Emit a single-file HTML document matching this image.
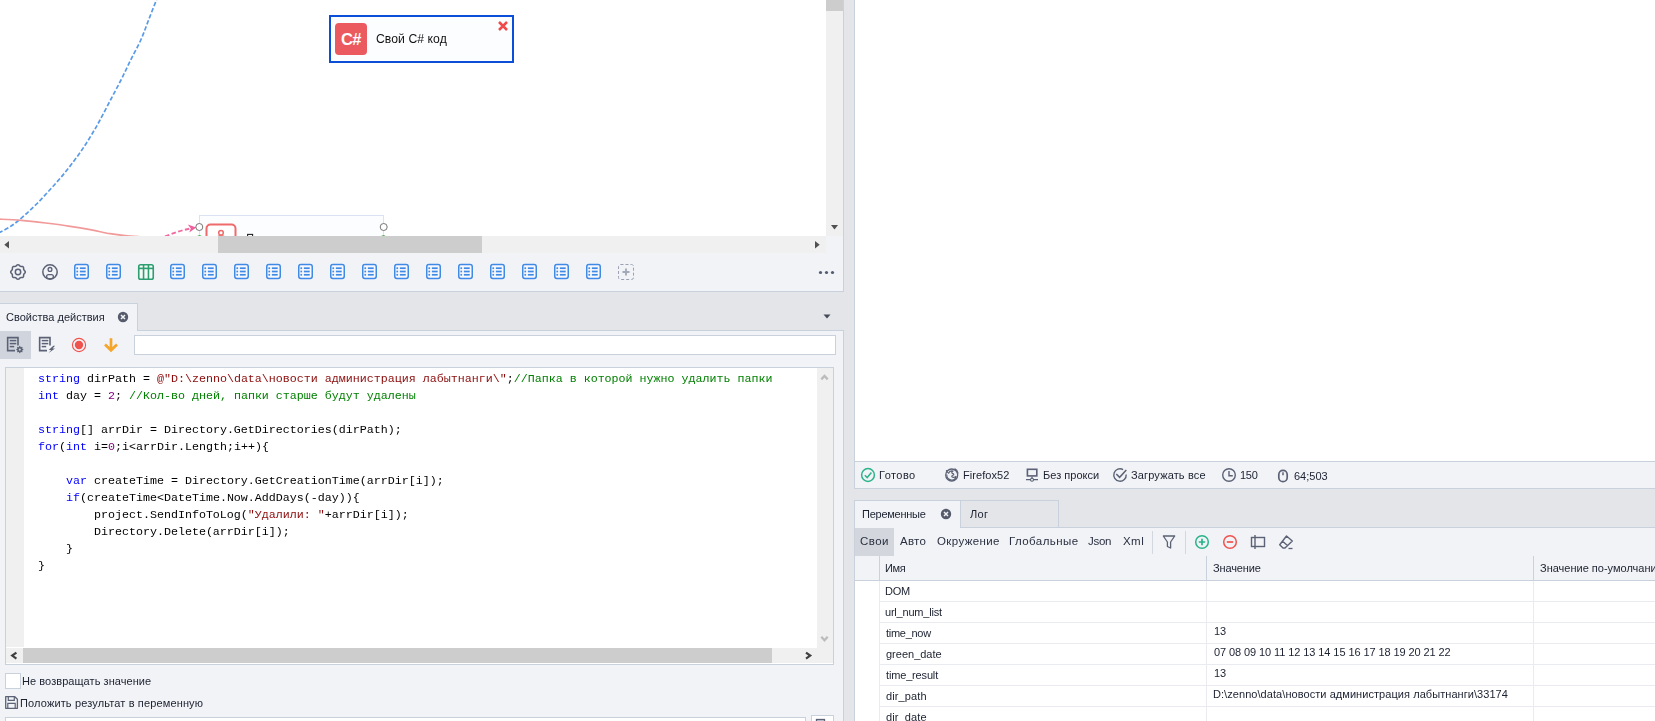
<!DOCTYPE html>
<html lang="ru">
<head>
<meta charset="utf-8">
<title>ProjectMaker</title>
<style>
*{box-sizing:border-box;margin:0;padding:0}
html,body{width:1655px;height:721px;overflow:hidden;background:#fff}
body{position:relative;font-family:"Liberation Sans","DejaVu Sans",sans-serif;font-size:11px;color:#1c2130}
.abs{position:absolute}
.t{position:absolute;white-space:nowrap;line-height:14px;will-change:transform}
/* ---------- left: canvas ---------- */
#canvas{left:0;top:0;width:826px;height:236px;background:#fff;overflow:hidden}
#vsb{left:826px;top:0;width:17px;height:236px;background:#f0f0f0}
#vsb .thumb{left:0;top:0;width:17px;height:11px;background:#cdcdcd}
#hsb{left:0;top:236px;width:826px;height:17px;background:#f0f0f0}
#hsb .thumb{left:218px;top:0;width:264px;height:17px;background:#cdcdcd}
#corner{left:826px;top:236px;width:17px;height:17px;background:#f2f3f7}
#lborder{left:843px;top:0;width:1px;height:292px;background:#c9d1dd}
#split{left:844px;top:0;width:10px;height:721px;background:#e4e5e9}
#rborder{left:854px;top:0;width:1px;height:721px;background:#c9d1dd}
#tools{left:0;top:253px;width:843px;height:38px;background:#f2f3f7}
#toolsb{left:0;top:291px;width:844px;height:1px;background:#c9d1dd}
#gap1{left:0;top:292px;width:844px;height:39px;background:#e4e5e9}
/* ---------- left: properties ---------- */
#ptab{left:0;top:303px;width:138px;height:28px;background:#f2f3f7;border-top:1px solid #c9d1dd;border-right:1px solid #c9d1dd}
#ptabline{left:138px;top:330px;width:706px;height:1px;background:#c9d1dd}
#props{left:0;top:331px;width:844px;height:390px;background:#f2f3f7}
#propsr{left:843px;top:331px;width:1px;height:390px;background:#c9d1dd}
#btn1{left:0;top:331px;width:31px;height:28px;background:#d3d6dc}
#inp{left:134px;top:335px;width:702px;height:20px;background:#fff;border:1px solid #c9d1dd}
#editor{left:5px;top:367px;width:829px;height:298px;background:#fff;border:1px solid #c9d1dd}
#gutter{left:6px;top:368px;width:18px;height:279px;background:#f0f0f0}
#evsb{left:817px;top:368px;width:16px;height:280px;background:#f0f0f0}
#ehsb{left:6px;top:648px;width:827px;height:15px;background:#f0f0f0}
#ehsb .thumb{left:17px;top:0;width:749px;height:15px;background:#cdcdcd}
#code{left:38px;top:371px;font-family:"Liberation Mono","DejaVu Sans Mono",monospace;font-size:11.67px;line-height:17px;color:#000;white-space:pre;position:absolute;will-change:transform}
.k{color:#0000ff}.s{color:#8b0a0a}.c{color:#008000}.n{color:#800080}
#chk{left:5px;top:673px;width:16px;height:16px;background:#fff;border:1px solid #c9d1dd}
#field{left:5px;top:717px;width:801px;height:10px;background:#fff;border:1px solid #c9d1dd}
#fbtn{left:811px;top:715px;width:23px;height:10px;background:#fff;border:1px solid #c9d1dd}
/* ---------- right ---------- */
#browser{left:855px;top:0;width:800px;height:461px;background:#fff}
#status{left:855px;top:461px;width:800px;height:28px;background:#f2f3f7;border-top:1px solid #c9d1dd;border-bottom:1px solid #c9d1dd}
#gap2{left:855px;top:489px;width:800px;height:39px;background:#e4e5e9}
#vtab{left:855px;top:500px;width:106px;height:28px;background:#f2f3f7;border-top:1px solid #c9d1dd;border-right:1px solid #c9d1dd}
#ltab{left:961px;top:500px;width:98px;height:28px;background:#e4e5e9;border-top:1px solid #c9d1dd;border-right:1px solid #c9d1dd;border-bottom:1px solid #c9d1dd}
#vtabline{left:1059px;top:527px;width:596px;height:1px;background:#c9d1dd}
#vars{left:855px;top:528px;width:800px;height:193px;background:#f2f3f7}
#svoi{left:855px;top:528px;width:39px;height:28px;background:#d3d6dc}
.vsep{width:1px;top:531px;height:23px;background:#d3d8e0}
#grid{left:855px;top:581px;width:800px;height:140px;background:#fff}
#hdrline{left:855px;top:580px;width:800px;height:1px;background:#c9d1dd}
.hl{left:879px;width:776px;height:1px;background:#e9ebf0}
.vl{top:581px;width:1px;height:140px;background:#e9ebf0}
.hvl{top:556px;width:1px;height:25px;background:#c9d1dd}
.seg{font-size:11.5px;letter-spacing:.2px;color:#2a3040}
</style>
</head>
<body>
<!-- LEFT: canvas -->
<div id="canvas" class="abs">
<svg class="abs" style="left:0;top:0" width="826" height="236" viewBox="0 0 826 236">
  <path d="M160.3 -10.0 C159.7 -8.3 158.4 -5.0 156.4 0.0 C154.4 5.0 151.2 13.3 148.6 20.0 C146.0 26.7 143.8 33.3 140.8 40.0 C137.8 46.7 134.0 53.3 130.7 60.0 C127.4 66.7 124.4 73.3 121.0 80.0 C117.6 86.7 114.0 93.3 110.5 100.0 C107.0 106.7 102.7 115.0 100.0 120.0 C97.3 125.0 96.9 125.8 94.4 130.0 C91.9 134.2 88.5 140.0 85.0 145.3 C81.5 150.6 77.2 156.7 73.2 162.0 C69.2 167.3 65.1 172.5 61.0 177.3 C56.9 182.1 52.9 186.6 48.8 191.0 C44.7 195.4 40.7 199.9 36.6 204.0 C32.5 208.1 28.5 211.8 24.4 215.4 C20.3 219.0 16.3 222.5 12.2 225.3 C8.1 228.1 3.4 230.4 0.0 232.2 C-3.4 234.0 -6.7 235.4 -8.0 236.0" fill="none" stroke="#5a9be8" stroke-width="1.700" stroke-dasharray="4.400 2.100"/>
  <path d="M-10.0 219.0 C-8.3 219.0 -5.2 219.0 0.0 219.2 C5.2 219.4 13.8 219.7 21.4 220.3 C29.0 220.9 37.9 222.0 45.8 223.0 C53.7 224.0 61.0 224.9 68.6 226.1 C76.2 227.2 84.6 228.6 91.5 229.9 C98.4 231.2 104.4 232.8 110.0 233.7 C115.6 234.6 119.8 235.1 125.0 235.6 C130.2 236.1 138.3 236.6 141.0 236.8" fill="none" stroke="#f29a9a" stroke-width="1.700"/>
  <path d="M165 236.500 C175 232.500 182 230.200 190 228.600" fill="none" stroke="#f26aa0" stroke-width="1.900" stroke-dasharray="4.500 2.500"/>
  <path d="M187.800 224.600 L196.400 227.600 L189.200 232.400 L190.800 228.400 Z" fill="#f0609a"/>
  <rect x="199.5" y="215.5" width="184" height="40" fill="#fcfdff" stroke="#dbe3f2" stroke-width="1"/>
  <rect x="206.5" y="224.5" width="29" height="29" rx="4" fill="#fff" stroke="#ef6b6b" stroke-width="2"/>
  <circle cx="221" cy="232.800" r="2.300" fill="none" stroke="#ef6b6b" stroke-width="1.500"/><path d="M216.500 240 C216.500 237 218.500 235.800 221 235.800 C223.500 235.800 225.500 237 225.500 240" fill="none" stroke="#ef6b6b" stroke-width="1.500"/>
  <rect x="247.600" y="234.400" width="5" height="4" fill="#fff" stroke="#222" stroke-width="1.100"/>
  <circle cx="199.500" cy="237.700" r="2.500" fill="#2ca02c"/>
  <circle cx="383.500" cy="237.700" r="2.500" fill="#2ca02c"/>
  <circle cx="199.300" cy="227" r="3.500" fill="#fff" stroke="#666" stroke-width="0.900"/>
  <circle cx="383.700" cy="227" r="3.500" fill="#fff" stroke="#666" stroke-width="0.900"/>
</svg>
<div class="abs" style="left:329px;top:15px;width:185px;height:48px;border:2px solid #0b4fd8;background:#fcfdff"></div>
<div class="abs" style="left:335px;top:23px;width:32px;height:32px;border-radius:4px;background:#eb5a5e;color:#fff;font-weight:bold;font-size:16.5px;line-height:32px;text-align:center;letter-spacing:-.5px">C#</div>
<div class="t" style="left:376.0px;top:32px;font-size:12.2px;color:#111;letter-spacing:0.06px">Свой C# код</div>
<svg class="abs" style="left:497px;top:20px" width="12" height="12" viewBox="0 0 12 12"><path d="M2 2 L10 10 M10 2 L2 10" stroke="#f04a4a" stroke-width="2.500" fill="none"/></svg>
</div>
<div id="vsb" class="abs"><div class="thumb abs"></div>
<svg class="abs" style="left:5px;top:225px" width="7" height="5" viewBox="0 0 7 5"><path d="M0 0H7L3.500 4.500Z" fill="#505050"/></svg></div>
<div id="hsb" class="abs"><div class="thumb abs"></div>
<svg class="abs" style="left:4px;top:5px" width="5" height="8" viewBox="0 0 5 8"><path d="M5 0V7.500L0.300 3.750Z" fill="#505050"/></svg>
<svg class="abs" style="left:815px;top:5px" width="5" height="8" viewBox="0 0 5 8"><path d="M0 0V7.500L4.700 3.750Z" fill="#505050"/></svg></div>
<div id="corner" class="abs"></div>
<div id="tools" class="abs"></div>
<div id="toolsb" class="abs"></div>
<div id="gap1" class="abs"></div>
<div id="lborder" class="abs"></div>
<div id="split" class="abs"></div>
<div id="rborder" class="abs"></div>
<!--TOOLICONS--><svg class="abs" style="left:0;top:253px" width="843" height="38" viewBox="0 253 843 38"><path d="M18.00 264.70 L18.70 264.90 L19.32 265.38 L19.85 265.91 L20.37 266.27 L21.00 266.39 L21.75 266.39 L22.53 266.48 L23.16 266.84 L23.52 267.47 L23.61 268.25 L23.61 269.00 L23.73 269.63 L24.09 270.15 L24.62 270.68 L25.10 271.30 L25.30 272.00 L25.10 272.70 L24.62 273.32 L24.09 273.85 L23.73 274.37 L23.61 275.00 L23.61 275.75 L23.52 276.53 L23.16 277.16 L22.53 277.52 L21.75 277.61 L21.00 277.61 L20.37 277.73 L19.85 278.09 L19.32 278.62 L18.70 279.10 L18.00 279.30 L17.30 279.10 L16.68 278.62 L16.15 278.09 L15.63 277.73 L15.00 277.61 L14.25 277.61 L13.47 277.52 L12.84 277.16 L12.48 276.53 L12.39 275.75 L12.39 275.00 L12.27 274.37 L11.91 273.85 L11.38 273.32 L10.90 272.70 L10.70 272.00 L10.90 271.30 L11.38 270.68 L11.91 270.15 L12.27 269.63 L12.39 269.00 L12.39 268.25 L12.48 267.47 L12.84 266.84 L13.47 266.48 L14.25 266.39 L15.00 266.39 L15.63 266.27 L16.15 265.91 L16.68 265.38 L17.30 264.90 L18.00 264.70 Z" fill="none" stroke="#5b6275" stroke-width="1.5" stroke-linejoin="round"/><circle cx="18" cy="272" r="2.700" fill="none" stroke="#5b6275" stroke-width="1.5"/><circle cx="50" cy="272" r="7.200" fill="none" stroke="#5b6275" stroke-width="1.5"/><circle cx="50" cy="269.4" r="1.900" fill="none" stroke="#5b6275" stroke-width="1.3"/><rect x="46.6" y="274.6" width="6.800" height="4" rx="2" fill="#f2f3f7" stroke="#5b6275" stroke-width="1.3"/><rect x="74.75" y="264.55" width="13.500" height="14" rx="2.200" fill="#f6f8fc" stroke="#3f8ae6" stroke-width="1.5"/><rect x="76.40" y="267.35" width="1.700" height="1.700" fill="#3f8ae6"/><rect x="79.90" y="267.35" width="5.800" height="1.700" fill="#3f8ae6"/><rect x="76.40" y="270.65" width="1.700" height="1.700" fill="#3f8ae6"/><rect x="79.90" y="270.65" width="5.800" height="1.700" fill="#3f8ae6"/><rect x="76.40" y="273.95" width="1.700" height="1.700" fill="#3f8ae6"/><rect x="79.90" y="273.95" width="5.800" height="1.700" fill="#3f8ae6"/><rect x="106.75" y="264.55" width="13.500" height="14" rx="2.200" fill="#f6f8fc" stroke="#3f8ae6" stroke-width="1.5"/><rect x="108.40" y="267.35" width="1.700" height="1.700" fill="#3f8ae6"/><rect x="111.90" y="267.35" width="5.800" height="1.700" fill="#3f8ae6"/><rect x="108.40" y="270.65" width="1.700" height="1.700" fill="#3f8ae6"/><rect x="111.90" y="270.65" width="5.800" height="1.700" fill="#3f8ae6"/><rect x="108.40" y="273.95" width="1.700" height="1.700" fill="#3f8ae6"/><rect x="111.90" y="273.95" width="5.800" height="1.700" fill="#3f8ae6"/><rect x="138.75" y="264.75" width="14.500" height="14.500" rx="1.800" fill="#f6fbf8" stroke="#2e9e70" stroke-width="1.600"/><rect x="138.50" y="267.60" width="15" height="1.600" fill="#2e9e70"/><rect x="142.75" y="264.50" width="1.600" height="15" fill="#2e9e70"/><rect x="147.65" y="264.50" width="1.600" height="15" fill="#2e9e70"/><rect x="170.75" y="264.55" width="13.500" height="14" rx="2.200" fill="#f6f8fc" stroke="#3f8ae6" stroke-width="1.5"/><rect x="172.40" y="267.35" width="1.700" height="1.700" fill="#3f8ae6"/><rect x="175.90" y="267.35" width="5.800" height="1.700" fill="#3f8ae6"/><rect x="172.40" y="270.65" width="1.700" height="1.700" fill="#3f8ae6"/><rect x="175.90" y="270.65" width="5.800" height="1.700" fill="#3f8ae6"/><rect x="172.40" y="273.95" width="1.700" height="1.700" fill="#3f8ae6"/><rect x="175.90" y="273.95" width="5.800" height="1.700" fill="#3f8ae6"/><rect x="202.75" y="264.55" width="13.500" height="14" rx="2.200" fill="#f6f8fc" stroke="#3f8ae6" stroke-width="1.5"/><rect x="204.40" y="267.35" width="1.700" height="1.700" fill="#3f8ae6"/><rect x="207.90" y="267.35" width="5.800" height="1.700" fill="#3f8ae6"/><rect x="204.40" y="270.65" width="1.700" height="1.700" fill="#3f8ae6"/><rect x="207.90" y="270.65" width="5.800" height="1.700" fill="#3f8ae6"/><rect x="204.40" y="273.95" width="1.700" height="1.700" fill="#3f8ae6"/><rect x="207.90" y="273.95" width="5.800" height="1.700" fill="#3f8ae6"/><rect x="234.75" y="264.55" width="13.500" height="14" rx="2.200" fill="#f6f8fc" stroke="#3f8ae6" stroke-width="1.5"/><rect x="236.40" y="267.35" width="1.700" height="1.700" fill="#3f8ae6"/><rect x="239.90" y="267.35" width="5.800" height="1.700" fill="#3f8ae6"/><rect x="236.40" y="270.65" width="1.700" height="1.700" fill="#3f8ae6"/><rect x="239.90" y="270.65" width="5.800" height="1.700" fill="#3f8ae6"/><rect x="236.40" y="273.95" width="1.700" height="1.700" fill="#3f8ae6"/><rect x="239.90" y="273.95" width="5.800" height="1.700" fill="#3f8ae6"/><rect x="266.75" y="264.55" width="13.500" height="14" rx="2.200" fill="#f6f8fc" stroke="#3f8ae6" stroke-width="1.5"/><rect x="268.40" y="267.35" width="1.700" height="1.700" fill="#3f8ae6"/><rect x="271.90" y="267.35" width="5.800" height="1.700" fill="#3f8ae6"/><rect x="268.40" y="270.65" width="1.700" height="1.700" fill="#3f8ae6"/><rect x="271.90" y="270.65" width="5.800" height="1.700" fill="#3f8ae6"/><rect x="268.40" y="273.95" width="1.700" height="1.700" fill="#3f8ae6"/><rect x="271.90" y="273.95" width="5.800" height="1.700" fill="#3f8ae6"/><rect x="298.75" y="264.55" width="13.500" height="14" rx="2.200" fill="#f6f8fc" stroke="#3f8ae6" stroke-width="1.5"/><rect x="300.40" y="267.35" width="1.700" height="1.700" fill="#3f8ae6"/><rect x="303.90" y="267.35" width="5.800" height="1.700" fill="#3f8ae6"/><rect x="300.40" y="270.65" width="1.700" height="1.700" fill="#3f8ae6"/><rect x="303.90" y="270.65" width="5.800" height="1.700" fill="#3f8ae6"/><rect x="300.40" y="273.95" width="1.700" height="1.700" fill="#3f8ae6"/><rect x="303.90" y="273.95" width="5.800" height="1.700" fill="#3f8ae6"/><rect x="330.75" y="264.55" width="13.500" height="14" rx="2.200" fill="#f6f8fc" stroke="#3f8ae6" stroke-width="1.5"/><rect x="332.40" y="267.35" width="1.700" height="1.700" fill="#3f8ae6"/><rect x="335.90" y="267.35" width="5.800" height="1.700" fill="#3f8ae6"/><rect x="332.40" y="270.65" width="1.700" height="1.700" fill="#3f8ae6"/><rect x="335.90" y="270.65" width="5.800" height="1.700" fill="#3f8ae6"/><rect x="332.40" y="273.95" width="1.700" height="1.700" fill="#3f8ae6"/><rect x="335.90" y="273.95" width="5.800" height="1.700" fill="#3f8ae6"/><rect x="362.75" y="264.55" width="13.500" height="14" rx="2.200" fill="#f6f8fc" stroke="#3f8ae6" stroke-width="1.5"/><rect x="364.40" y="267.35" width="1.700" height="1.700" fill="#3f8ae6"/><rect x="367.90" y="267.35" width="5.800" height="1.700" fill="#3f8ae6"/><rect x="364.40" y="270.65" width="1.700" height="1.700" fill="#3f8ae6"/><rect x="367.90" y="270.65" width="5.800" height="1.700" fill="#3f8ae6"/><rect x="364.40" y="273.95" width="1.700" height="1.700" fill="#3f8ae6"/><rect x="367.90" y="273.95" width="5.800" height="1.700" fill="#3f8ae6"/><rect x="394.75" y="264.55" width="13.500" height="14" rx="2.200" fill="#f6f8fc" stroke="#3f8ae6" stroke-width="1.5"/><rect x="396.40" y="267.35" width="1.700" height="1.700" fill="#3f8ae6"/><rect x="399.90" y="267.35" width="5.800" height="1.700" fill="#3f8ae6"/><rect x="396.40" y="270.65" width="1.700" height="1.700" fill="#3f8ae6"/><rect x="399.90" y="270.65" width="5.800" height="1.700" fill="#3f8ae6"/><rect x="396.40" y="273.95" width="1.700" height="1.700" fill="#3f8ae6"/><rect x="399.90" y="273.95" width="5.800" height="1.700" fill="#3f8ae6"/><rect x="426.75" y="264.55" width="13.500" height="14" rx="2.200" fill="#f6f8fc" stroke="#3f8ae6" stroke-width="1.5"/><rect x="428.40" y="267.35" width="1.700" height="1.700" fill="#3f8ae6"/><rect x="431.90" y="267.35" width="5.800" height="1.700" fill="#3f8ae6"/><rect x="428.40" y="270.65" width="1.700" height="1.700" fill="#3f8ae6"/><rect x="431.90" y="270.65" width="5.800" height="1.700" fill="#3f8ae6"/><rect x="428.40" y="273.95" width="1.700" height="1.700" fill="#3f8ae6"/><rect x="431.90" y="273.95" width="5.800" height="1.700" fill="#3f8ae6"/><rect x="458.75" y="264.55" width="13.500" height="14" rx="2.200" fill="#f6f8fc" stroke="#3f8ae6" stroke-width="1.5"/><rect x="460.40" y="267.35" width="1.700" height="1.700" fill="#3f8ae6"/><rect x="463.90" y="267.35" width="5.800" height="1.700" fill="#3f8ae6"/><rect x="460.40" y="270.65" width="1.700" height="1.700" fill="#3f8ae6"/><rect x="463.90" y="270.65" width="5.800" height="1.700" fill="#3f8ae6"/><rect x="460.40" y="273.95" width="1.700" height="1.700" fill="#3f8ae6"/><rect x="463.90" y="273.95" width="5.800" height="1.700" fill="#3f8ae6"/><rect x="490.75" y="264.55" width="13.500" height="14" rx="2.200" fill="#f6f8fc" stroke="#3f8ae6" stroke-width="1.5"/><rect x="492.40" y="267.35" width="1.700" height="1.700" fill="#3f8ae6"/><rect x="495.90" y="267.35" width="5.800" height="1.700" fill="#3f8ae6"/><rect x="492.40" y="270.65" width="1.700" height="1.700" fill="#3f8ae6"/><rect x="495.90" y="270.65" width="5.800" height="1.700" fill="#3f8ae6"/><rect x="492.40" y="273.95" width="1.700" height="1.700" fill="#3f8ae6"/><rect x="495.90" y="273.95" width="5.800" height="1.700" fill="#3f8ae6"/><rect x="522.75" y="264.55" width="13.500" height="14" rx="2.200" fill="#f6f8fc" stroke="#3f8ae6" stroke-width="1.5"/><rect x="524.40" y="267.35" width="1.700" height="1.700" fill="#3f8ae6"/><rect x="527.90" y="267.35" width="5.800" height="1.700" fill="#3f8ae6"/><rect x="524.40" y="270.65" width="1.700" height="1.700" fill="#3f8ae6"/><rect x="527.90" y="270.65" width="5.800" height="1.700" fill="#3f8ae6"/><rect x="524.40" y="273.95" width="1.700" height="1.700" fill="#3f8ae6"/><rect x="527.90" y="273.95" width="5.800" height="1.700" fill="#3f8ae6"/><rect x="554.75" y="264.55" width="13.500" height="14" rx="2.200" fill="#f6f8fc" stroke="#3f8ae6" stroke-width="1.5"/><rect x="556.40" y="267.35" width="1.700" height="1.700" fill="#3f8ae6"/><rect x="559.90" y="267.35" width="5.800" height="1.700" fill="#3f8ae6"/><rect x="556.40" y="270.65" width="1.700" height="1.700" fill="#3f8ae6"/><rect x="559.90" y="270.65" width="5.800" height="1.700" fill="#3f8ae6"/><rect x="556.40" y="273.95" width="1.700" height="1.700" fill="#3f8ae6"/><rect x="559.90" y="273.95" width="5.800" height="1.700" fill="#3f8ae6"/><rect x="586.75" y="264.55" width="13.500" height="14" rx="2.200" fill="#f6f8fc" stroke="#3f8ae6" stroke-width="1.5"/><rect x="588.40" y="267.35" width="1.700" height="1.700" fill="#3f8ae6"/><rect x="591.90" y="267.35" width="5.800" height="1.700" fill="#3f8ae6"/><rect x="588.40" y="270.65" width="1.700" height="1.700" fill="#3f8ae6"/><rect x="591.90" y="270.65" width="5.800" height="1.700" fill="#3f8ae6"/><rect x="588.40" y="273.95" width="1.700" height="1.700" fill="#3f8ae6"/><rect x="591.90" y="273.95" width="5.800" height="1.700" fill="#3f8ae6"/><rect x="618.50" y="264.50" width="15" height="15" rx="2" fill="none" stroke="#9aa1b2" stroke-width="1" stroke-dasharray="3 2"/><path d="M622.5 272H629.5M626 268.5V275.5" stroke="#a3a9b8" stroke-width="1.900" fill="none"/><circle cx="820.5" cy="272.500" r="1.600" fill="#525a70"/><circle cx="826.5" cy="272.500" r="1.600" fill="#525a70"/><circle cx="832.5" cy="272.500" r="1.600" fill="#525a70"/></svg><!--/TOOLICONS-->
<!-- LEFT: properties -->
<div id="props" class="abs"></div>
<div id="propsr" class="abs"></div>
<div id="ptab" class="abs"></div>
<div id="ptabline" class="abs"></div>
<div class="t" style="left:6.4px;top:310px;letter-spacing:0.01px">Свойства действия</div>
<!--PROPICONS--><svg class="abs" style="left:0;top:331px" width="134" height="28" viewBox="0 331 134 28"><rect x="0" y="331" width="31" height="28" fill="#d0d4dc"/><path d="M18 345.5V337.65H7.65V350.6H15" fill="none" stroke="#5b6275" stroke-width="1.600"/><rect x="9.7" y="339.85" width="6.6" height="1.500" fill="#5b6275"/><rect x="9.7" y="342.85" width="6.6" height="1.500" fill="#5b6275"/><rect x="9.7" y="345.85" width="4.5" height="1.500" fill="#5b6275"/><path d="M19.80 345.85 L20.25 346.18 L20.54 346.85 L20.78 347.24 L21.23 347.13 L21.90 346.86 L22.45 346.95 L22.54 347.50 L22.27 348.18 L22.16 348.62 L22.55 348.86 L23.22 349.15 L23.55 349.60 L23.22 350.05 L22.55 350.34 L22.16 350.58 L22.27 351.03 L22.54 351.70 L22.45 352.25 L21.90 352.34 L21.23 352.07 L20.78 351.96 L20.54 352.35 L20.25 353.02 L19.80 353.35 L19.35 353.02 L19.06 352.35 L18.82 351.96 L18.38 352.07 L17.70 352.34 L17.15 352.25 L17.06 351.70 L17.33 351.03 L17.44 350.58 L17.05 350.34 L16.38 350.05 L16.05 349.60 L16.38 349.15 L17.05 348.86 L17.44 348.62 L17.33 348.18 L17.06 347.50 L17.15 346.95 L17.70 346.86 L18.38 347.13 L18.82 347.24 L19.06 346.85 L19.35 346.18 L19.80 345.85 Z" fill="#5b6275"/><circle cx="19.8" cy="349.6" r="1.050" fill="#d0d4dc"/><path d="M50 345.5V337.65H39.65V350.6H47" fill="none" stroke="#5b6275" stroke-width="1.600"/><rect x="41.7" y="339.85" width="6.6" height="1.500" fill="#5b6275"/><rect x="41.7" y="342.85" width="6.6" height="1.500" fill="#5b6275"/><rect x="41.7" y="345.85" width="4.5" height="1.500" fill="#5b6275"/><path d="M53.300 345.800 L48.700 350 H51.200 L48.600 353 L55 348.500 H52.600 L55 345.800 Z" fill="#5b6275"/><circle cx="79" cy="345" r="6.600" fill="none" stroke="#f0524d" stroke-width="1.100"/><circle cx="79" cy="345" r="4.200" fill="#f0524d"/><path d="M111 338.300 V350 M105 344.500 L111 350.300 L117 344.500" fill="none" stroke="#f5a52a" stroke-width="2.700" stroke-linecap="butt" stroke-linejoin="miter"/></svg><svg class="abs" style="left:117px;top:311px" width="12" height="12" viewBox="0 0 12 12"><circle cx="6" cy="6" r="5.200" fill="#555b6a"/><path d="M4 4L8 8M8 4L4 8" stroke="#f2f3f7" stroke-width="1.500" fill="none"/></svg><svg class="abs" style="left:823px;top:314px" width="8" height="5" viewBox="0 0 8 5"><path d="M0.500 0.500H7.500L4 4.500Z" fill="#444a58"/></svg><!--/PROPICONS-->
<div id="inp" class="abs"></div>
<div id="editor" class="abs"></div>
<div id="gutter" class="abs"></div>
<div id="evsb" class="abs"></div>
<div id="ehsb" class="abs"><div class="thumb abs"></div></div>
<pre id="code"><span class="k">string</span> dirPath = <span class="s">@"D:\zenno\data\новости администрация лабытнанги\"</span>;<span class="c">//Папка в которой нужно удалить папки</span>
<span class="k">int</span> day = <span class="n">2</span>; <span class="c">//Кол-во дней, папки старше будут удалены</span>

<span class="k">string</span>[] arrDir = Directory.GetDirectories(dirPath);
<span class="k">for</span>(<span class="k">int</span> i=<span class="n">0</span>;i&lt;arrDir.Length;i++){

    <span class="k">var</span> createTime = Directory.GetCreationTime(arrDir[i]);
    <span class="k">if</span>(createTime&lt;DateTime.Now.AddDays(-day)){
        project.SendInfoToLog(<span class="s">"Удалили: "</span>+arrDir[i]);
        Directory.Delete(arrDir[i]);
    }
}</pre>
<div id="chk" class="abs"></div>
<div class="t" style="left:22.2px;top:674px;letter-spacing:0.06px">Не возвращать значение</div>
<div class="t" style="left:19.8px;top:696px;letter-spacing:0.14px">Положить результат в переменную</div>
<div id="field" class="abs"></div>
<div id="fbtn" class="abs"></div>
<svg class="abs" style="left:0;top:367px" width="843" height="354" viewBox="0 367 843 354">
<path d="M16.400 652.600 L12.200 655.600 L16.400 658.600" fill="none" stroke="#404040" stroke-width="2.200"/>
<path d="M806 652.600 L810.200 655.600 L806 658.600" fill="none" stroke="#404040" stroke-width="2.200"/>
<path d="M821.300 379.400 L824.500 376 L827.700 379.400" fill="none" stroke="#bcbcbc" stroke-width="2.300"/>
<path d="M821.300 636.800 L824.500 640.200 L827.700 636.800" fill="none" stroke="#bcbcbc" stroke-width="2.300"/>
<path d="M5.700 696.700 H14.800 L17.400 699.300 V708.300 H5.700 Z" fill="none" stroke="#5b6275" stroke-width="1.300" stroke-linejoin="round"/>
<path d="M8.300 697 V700.300 H14.300 V697 M7.800 708 V703.300 H15.200 V708" fill="none" stroke="#5b6275" stroke-width="1.200"/>
<rect x="816.500" y="719.500" width="8" height="4" fill="#c8ccd6" stroke="#5b6275" stroke-width="1.300"/>
</svg>
<!-- RIGHT -->
<div id="browser" class="abs"></div>
<div id="status" class="abs"></div>
<div id="gap2" class="abs"></div><div class="abs" style="left:854px;top:489px;width:1px;height:11px;background:#e4e5e9"></div>
<div id="vars" class="abs"></div>
<div id="vtab" class="abs"></div>
<div id="ltab" class="abs"></div>
<div id="vtabline" class="abs"></div>
<div id="svoi" class="abs"></div>
<div id="grid" class="abs"></div>
<div id="hdrline" class="abs"></div>
<!--RIGHTCONTENT--><svg class="abs" style="left:855px;top:462px" width="800" height="27" viewBox="855 462 800 27"><circle cx="868" cy="475" r="6.400" fill="none" stroke="#2bb38a" stroke-width="1.500"/><path d="M864.800 475.200 L867.200 477.600 L871.400 472.600" fill="none" stroke="#2bb38a" stroke-width="1.500"/><circle cx="951.700" cy="475" r="6" fill="none" stroke="#5b6275" stroke-width="1.300"/><path d="M946.300 470.200 C946.800 472 947.500 472.800 948.600 473.200 C949.200 471.500 951 470.500 953 471 C951.800 471.800 951.500 472.600 952.200 473.400 C953.400 473.400 954 474 953.600 475 C952.600 475 951.800 475.600 951.800 476.600 C952.800 477.800 954.800 477.600 956 476.400 C955.600 479 953.500 480.300 951.300 480 C948.400 479.600 946.600 477.200 946.800 474.500" fill="none" stroke="#5b6275" stroke-width="1.200" stroke-linejoin="round"/><path d="M954.600 468.600 C956.600 469.600 957.800 471.400 958.200 473.500" fill="none" stroke="#5b6275" stroke-width="1.200"/><rect x="1027.400" y="469.300" width="9.400" height="6.600" fill="none" stroke="#5b6275" stroke-width="1.600"/><path d="M1032 476.500V478.500M1026 479.700H1038" stroke="#5b6275" stroke-width="1.300" fill="none"/><circle cx="1032" cy="479.700" r="1.500" fill="#f2f3f7" stroke="#5b6275" stroke-width="1.100"/><path d="M1123.10 469.63 A6.2 6.2 0 1 0 1126.18 474.46" fill="none" stroke="#5b6275" stroke-width="1.400"/><path d="M1116.300 474 L1119.600 477.300 L1126.300 470" fill="none" stroke="#5b6275" stroke-width="1.500"/><circle cx="1229" cy="475" r="6.300" fill="none" stroke="#5b6275" stroke-width="1.400"/><path d="M1229 471V475.700H1232.800" fill="none" stroke="#5b6275" stroke-width="1.400"/><rect x="1278.800" y="470.300" width="8.400" height="11.400" rx="4.200" fill="none" stroke="#5b6275" stroke-width="1.700"/><path d="M1283 472.300V475.300" stroke="#5b6275" stroke-width="1.500"/></svg><div class="t" style="left:878.9px;top:467.5px;letter-spacing:0.45px">Готово</div><div class="t" style="left:963.1px;top:467.5px;letter-spacing:0.06px">Firefox52</div><div class="t" style="left:1042.7px;top:467.5px;letter-spacing:0.03px">Без прокси</div><div class="t" style="left:1130.7px;top:467.5px;letter-spacing:0.15px">Загружать все</div><div class="t" style="left:1240.1px;top:467.5px;letter-spacing:-0.3px">150</div><div class="t" style="left:1294.1px;top:468.5px;letter-spacing:0.0px">64;503</div><div class="t" style="left:861.7px;top:506.5px;letter-spacing:-0.25px">Переменные</div><div class="t" style="left:969.9px;top:506.5px;letter-spacing:0.3px">Лог</div><svg class="abs" style="left:940px;top:508px" width="12" height="12" viewBox="0 0 12 12"><circle cx="6" cy="6" r="5.200" fill="#555b6a"/><path d="M4 4L8 8M8 4L4 8" stroke="#f2f3f7" stroke-width="1.500" fill="none"/></svg><div class="t seg" style="left:859.9px;top:534px;letter-spacing:0.45px">Свои</div><div class="t seg" style="left:899.5px;top:534px;letter-spacing:0.26px">Авто</div><div class="t seg" style="left:936.9px;top:534px;letter-spacing:0.39px">Окружение</div><div class="t seg" style="left:1008.9px;top:534px;letter-spacing:0.43px">Глобальные</div><div class="t seg" style="left:1088.4px;top:534px;letter-spacing:-0.3px">Json</div><div class="t seg" style="left:1122.9px;top:534px;letter-spacing:0.45px">Xml</div><div class="abs vsep" style="left:1152px"></div><div class="abs vsep" style="left:1185px"></div><svg class="abs" style="left:1155px;top:528px" width="150" height="28" viewBox="1155 528 150 28"><path d="M1163.300 536 H1174.700 L1170.600 542 V548 L1167.400 546.500 V542 Z" fill="none" stroke="#5b6275" stroke-width="1.300" stroke-linejoin="round"/><circle cx="1202" cy="542" r="6.300" fill="none" stroke="#2bb38a" stroke-width="1.500"/><path d="M1198.800 542H1205.200M1202 538.800V545.200" stroke="#2bb38a" stroke-width="1.700" fill="none"/><circle cx="1230" cy="542" r="6.300" fill="none" stroke="#f0524d" stroke-width="1.500"/><path d="M1226.800 542H1233.200" stroke="#f0524d" stroke-width="1.700" fill="none"/><rect x="1251.500" y="537.500" width="13" height="9" fill="none" stroke="#5b6275" stroke-width="1.400"/><path d="M1255 535V549" stroke="#5b6275" stroke-width="1.400"/><path d="M1286.500 536 L1292.300 541 L1285 548 H1283 L1279.700 544.800 Z M1282.300 541 L1288 546" fill="none" stroke="#5b6275" stroke-width="1.400" stroke-linejoin="round"/><path d="M1288.500 548.500H1292.500" stroke="#5b6275" stroke-width="1.300"/></svg><div class="abs hvl" style="left:879px"></div><div class="abs hvl" style="left:1206px"></div><div class="abs hvl" style="left:1533px"></div><div class="t" style="left:884.6px;top:560.5px;letter-spacing:-0.3px">Имя</div><div class="t" style="left:1213.1px;top:560.5px;letter-spacing:-0.14px">Значение</div><div class="t" style="left:1539.5px;top:560.5px">Значение по-умолчанию</div><div class="abs hl" style="top:601px"></div><div class="abs hl" style="top:622px"></div><div class="abs hl" style="top:643px"></div><div class="abs hl" style="top:664px"></div><div class="abs hl" style="top:685px"></div><div class="abs hl" style="top:706px"></div><div class="abs vl" style="left:879px"></div><div class="abs vl" style="left:1206px"></div><div class="abs vl" style="left:1533px"></div><div class="t" style="left:884.9px;top:584px;letter-spacing:-0.3px">DOM</div><div class="t" style="left:884.7px;top:605px;letter-spacing:-0.21px">url_num_list</div><div class="t" style="left:885.7px;top:626px;letter-spacing:-0.28px">time_now</div><div class="t" style="left:1213.5px;top:624px">13</div><div class="t" style="left:885.7px;top:647px;letter-spacing:0.0px">green_date</div><div class="t" style="left:1213.9px;top:645px;letter-spacing:-0.09px">07 08 09 10 11 12 13 14 15 16 17 18 19 20 21 22</div><div class="t" style="left:885.7px;top:668px;letter-spacing:-0.16px">time_result</div><div class="t" style="left:1213.5px;top:666px">13</div><div class="t" style="left:885.7px;top:689px;letter-spacing:0.12px">dir_path</div><div class="t" style="left:1212.7px;top:687px;letter-spacing:0.06px">D:\zenno\data\новости администрация лабытнанги\33174</div><div class="t" style="left:885.7px;top:710px;letter-spacing:0.12px">dir_date</div><!--/RIGHTCONTENT-->
</body>
</html>
